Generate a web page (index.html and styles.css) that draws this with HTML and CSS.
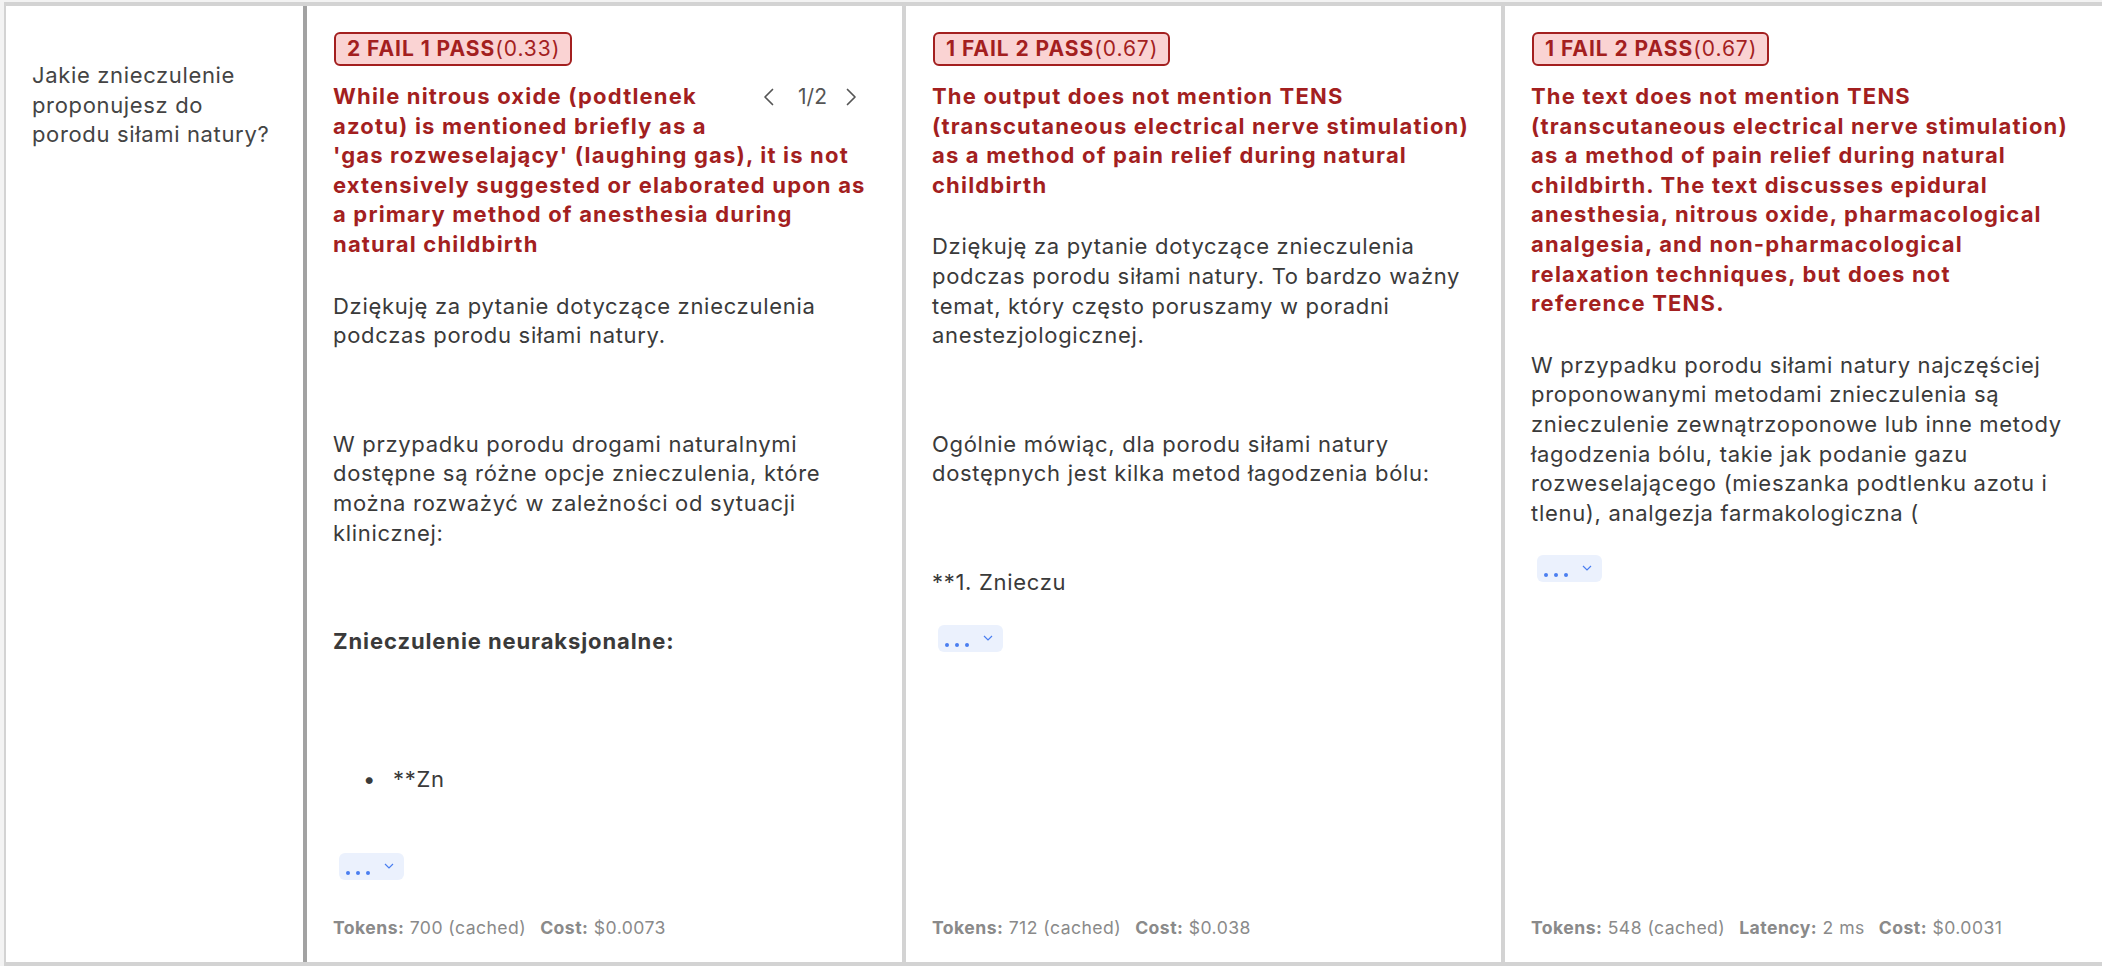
FILE: index.html
```html
<!DOCTYPE html>
<html lang="pl">
<head>
<meta charset="utf-8">
<title>Eval row</title>
<link rel="stylesheet" href="styles.css">
</head>
<body>
<div class="row">
  <div class="cell cell-q">
    <div class="question">Jakie znieczulenie proponujesz do porodu siłami natury?</div>
  </div>

  <div class="cell">
    <div class="body">
      <div class="badge"><b>2 FAIL 1 PASS</b>(0.33)</div>
      <div class="reason">
        <div class="pager">
          <svg class="chev" viewBox="0 0 13 20" width="13" height="20"><path d="M10.5 2.5 L3 10 L10.5 17.5"/></svg>
          <span class="pager-num">1/2</span>
          <svg class="chev" viewBox="0 0 13 20" width="13" height="20"><path d="M2.5 2.5 L10 10 L2.5 17.5"/></svg>
        </div>
        While nitrous oxide (podtlenek azotu) is mentioned briefly as a 'gas rozweselający' (laughing gas), it is not extensively suggested or elaborated upon as a primary method of anesthesia during natural childbirth
      </div>
      <p class="txt first">Dziękuję za pytanie dotyczące znieczulenia podczas porodu siłami natury.</p>
      <p class="txt gap-md">W przypadku porodu drogami naturalnymi dostępne są różne opcje znieczulenia, które można rozważyć w zależności od sytuacji klinicznej:</p>
      <p class="txt gap-md strong">Znieczulenie neuraksjonalne:</p>
      <ul class="list gap-lg"><li>**Zn</li></ul>
      <button class="more more-after-list" type="button"><span class="dots"><i></i><i></i><i></i></span><svg class="mini-chev" viewBox="0 0 10 6" width="10" height="6"><path d="M1 1 L5 5 L9 1"/></svg></button>
    </div>
    <div class="meta"><span class="mi"><b>Tokens:</b> 700 (cached)</span><span class="mi"><b>Cost:</b> $0.0073</span></div>
  </div>

  <div class="cell">
    <div class="body">
      <div class="badge"><b>1 FAIL 2 PASS</b>(0.67)</div>
      <div class="reason">The output does not mention TENS (transcutaneous electrical nerve stimulation) as a method of pain relief during natural childbirth</div>
      <p class="txt first">Dziękuję za pytanie dotyczące znieczulenia podczas porodu siłami natury. To bardzo ważny temat, który często poruszamy w poradni anestezjologicznej.</p>
      <p class="txt gap-md">Ogólnie mówiąc, dla porodu siłami natury dostępnych jest kilka metod łagodzenia bólu:</p>
      <p class="txt gap-md">**1. Znieczu</p>
      <button class="more" type="button"><span class="dots"><i></i><i></i><i></i></span><svg class="mini-chev" viewBox="0 0 10 6" width="10" height="6"><path d="M1 1 L5 5 L9 1"/></svg></button>
    </div>
    <div class="meta"><span class="mi"><b>Tokens:</b> 712 (cached)</span><span class="mi"><b>Cost:</b> $0.038</span></div>
  </div>

  <div class="cell cell-last">
    <div class="body">
      <div class="badge"><b>1 FAIL 2 PASS</b>(0.67)</div>
      <div class="reason">The text does not mention TENS (transcutaneous electrical nerve stimulation) as a method of pain relief during natural childbirth. The text discusses epidural anesthesia, nitrous oxide, pharmacological analgesia, and non-pharmacological relaxation techniques, but does not<br>reference TENS.</div>
      <p class="txt first">W przypadku porodu siłami natury najczęściej proponowanymi metodami znieczulenia są znieczulenie zewnątrzoponowe lub inne metody łagodzenia bólu, takie jak podanie gazu rozweselającego (mieszanka podtlenku azotu i tlenu), analgezja farmakologiczna (</p>
      <button class="more" type="button"><span class="dots"><i></i><i></i><i></i></span><svg class="mini-chev" viewBox="0 0 10 6" width="10" height="6"><path d="M1 1 L5 5 L9 1"/></svg></button>
    </div>
    <div class="meta"><span class="mi"><b>Tokens:</b> 548 (cached)</span><span class="mi"><b>Latency:</b> 2 ms</span><span class="mi"><b>Cost:</b> $0.0031</span></div>
  </div>
</div>
</body>
</html>
```
FILE: styles.css
```css
html, body {
  margin: 0;
  padding: 0;
}
body {
  background: #f3f3f3;
  font-family: Inter, "Noto Sans", "Liberation Sans", sans-serif;
  color: #3a3a3a;
  width: 2102px;
  height: 966px;
  overflow: hidden;
}
.row {
  display: flex;
  margin: 2px 0 0 4px;
  border-top: 4px solid #d3d3d3;
  border-bottom: 4px solid #d3d3d3;
  border-left: 2px solid #d3d3d3;
  height: 956px;
  background: #fff;
}
.cell {
  box-sizing: border-box;
  width: 599px;
  border-right: 4px solid #d3d3d3;
  padding: 26px 26px 22px 26px;
  display: flex;
  flex-direction: column;
}
.cell-q {
  width: 301px;
  border-right: 4px solid #a2a2a2;
  padding: 55px 26px 0 26px;
}
.cell-last {
  width: 596px;
  border-right: none;
}
.question {
  font-size: 22px;
  line-height: 29.6px;
  letter-spacing: 0.65px;
  color: #444;
}
.body {
  flex: 1;
}
.badge {
  display: inline-block;
  box-sizing: border-box;
  height: 34px;
  padding: 0 10px 0 11px;
  line-height: 30px;
  border: 2px solid #a31f1f;
  border-radius: 6px;
  background: #fad3d3;
  color: #a31f1f;
  font-size: 21px;
  letter-spacing: 0.95px;
  font-weight: 400;
  margin-left: 1px;
}
.badge b {
  font-weight: 700;
}
.reason {
  margin-top: 16px;
  color: #a31f1f;
  font-weight: 700;
  font-size: 22px;
  letter-spacing: 1.18px;
  line-height: 29.6px;
}
.pager {
  float: right;
  display: flex;
  align-items: center;
  height: 29.6px;
  margin: 0 18px 28px 36px;
  color: #555;
  font-weight: 400;
  letter-spacing: 0;
}
.pager-num {
  font-size: 21px;
  margin: 0 18px 0 23px;
}
.chev path {
  fill: none;
  stroke: #555;
  stroke-width: 1.7;
  stroke-linecap: round;
  stroke-linejoin: round;
}
.txt {
  margin: 0;
  font-size: 22px;
  line-height: 29.6px;
  letter-spacing: 0.7px;
  color: #3a3a3a;
}
.txt.first {
  margin-top: 32px;
}
.gap-md {
  margin-top: 79px !important;
}
.gap-lg {
  margin-top: 108px !important;
}
.strong {
  font-weight: 700;
  letter-spacing: 0.9px;
}
.list {
  margin: 0;
  padding-left: 60px;
  list-style: none;
  font-size: 22px;
  line-height: 29.6px;
  letter-spacing: 0.7px;
  color: #3a3a3a;
}
.list li::before {
  content: "•";
  display: inline-block;
  width: 30px;
  margin-left: -30px;
  letter-spacing: 0;
}
.more {
  display: block;
  position: relative;
  width: 65px;
  height: 27px;
  margin: 27px 0 0 6px;
  padding: 0;
  border: none;
  border-radius: 6px;
  background: #ebf1fd;
  cursor: pointer;
}
.more-after-list {
  margin-top: 59px;
}
.dots {
  position: absolute;
  left: 7px;
  top: 18px;
  display: flex;
  gap: 6px;
}
.dots i {
  display: block;
  width: 4px;
  height: 4px;
  border-radius: 50%;
  background: #4a7ef0;
}
.mini-chev {
  position: absolute;
  left: 45px;
  top: 10px;
}
.mini-chev path {
  fill: none;
  stroke: #4a7ef0;
  stroke-width: 1.2;
}
.meta {
  font-size: 17.6px;
  line-height: 25px;
  letter-spacing: 0.45px;
  color: #8a8a8a;
  display: flex;
}
.mi {
  margin-right: 14px;
}
.mi b {
  font-weight: 700;
}
```
